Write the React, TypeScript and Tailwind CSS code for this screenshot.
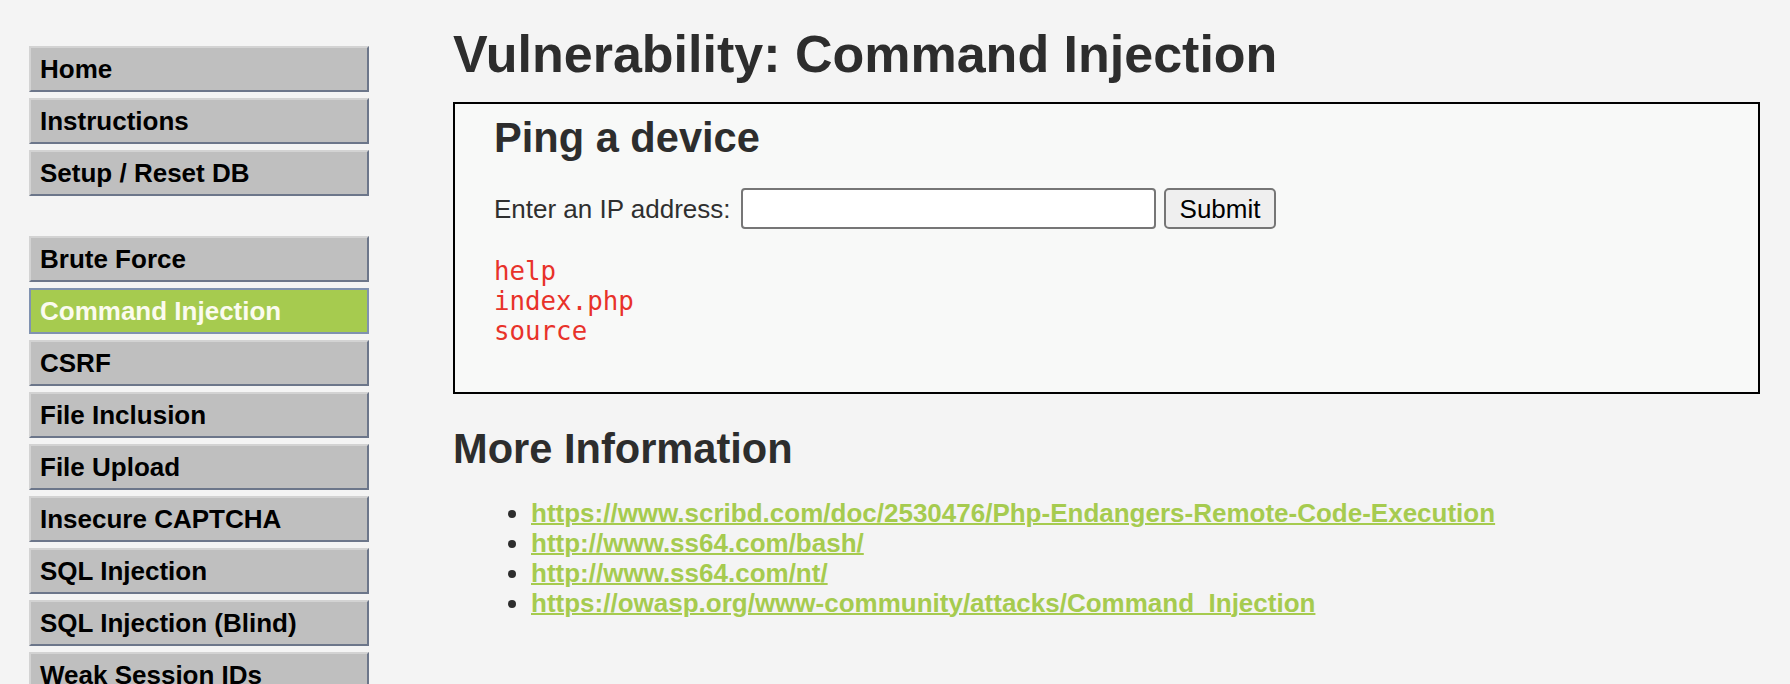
import React from "react";

/**
 * DVWA - Command Injection page
 * Left menu + main content (ping form, output, more info links)
 */

const topMenu = ["Home", "Instructions", "Setup / Reset DB"];

const vulnMenu = [
	"Brute Force",
	"Command Injection",
	"CSRF",
	"File Inclusion",
	"File Upload",
	"Insecure CAPTCHA",
	"SQL Injection",
	"SQL Injection (Blind)",
	"Weak Session IDs",
	"XSS (DOM)",
	"XSS (Reflected)",
];

const links = [
	"https://www.scribd.com/doc/2530476/Php-Endangers-Remote-Code-Execution",
	"http://www.ss64.com/bash/",
	"http://www.ss64.com/nt/",
	"https://owasp.org/www-community/attacks/Command_Injection",
];

const MenuItem = ({ label, selected }: { label: string; selected?: boolean }) => (
	<li>
		<a
			href="#"
			className={
				selected
					? "block border-2 border-[#8092b0] bg-[#a6cb4f] px-[9px] py-[6px] text-[26px] font-bold leading-[30px] text-[#fbfbef]"
					: "block border-2 border-t-[#d3d3d3] border-l-[#d3d3d3] border-r-[#6c768a] border-b-[#6c768a] bg-[#bfbfbf] px-[9px] py-[6px] text-[26px] font-bold leading-[30px] text-black"
			}
		>
			{label}
		</a>
	</li>
);

export default function App() {
	return (
		<div className="flex h-[684px] overflow-hidden bg-[#f4f4f4] font-['Liberation_Sans',Arial,sans-serif] text-[#2f2f2f]">
			{/* ================= MENU ================= */}
			<div className="ml-[29px] w-[340px] shrink-0 pt-[46px]">
				<ul className="flex flex-col gap-[6px]">
					{topMenu.map((m) => (
						<MenuItem key={m} label={m} />
					))}
				</ul>
				<ul className="mt-[40px] flex flex-col gap-[6px]">
					{vulnMenu.map((m) => (
						<MenuItem key={m} label={m} selected={m === "Command Injection"} />
					))}
				</ul>
			</div>

			{/* ================= BODY ================= */}
			<div className="ml-[84px] mr-[30px] flex-1 pt-[24px]">
				<h1 className="text-[52px] font-bold leading-[60px] text-[#2d2d2d]">
					Vulnerability: Command Injection
				</h1>

				<div className="mt-[18px] border-2 border-black bg-[#f8f9f8] pl-[39px] pt-[10px] pb-[46px]">
					<h2 className="text-[41.6px] font-bold leading-[48px] text-[#2d2d2d]">Ping a device</h2>

					<form className="mt-[26px] flex items-center text-[26px]" onSubmit={(e) => e.preventDefault()}>
						<span className="leading-[30px]">Enter an IP address:</span>
						<input
							type="text"
							className="ml-[10px] h-[41px] w-[415px] rounded-[4px] border-2 border-[#767676] bg-white"
						/>
						<button
							type="submit"
							className="ml-[8px] h-[41px] rounded-[5px] border-2 border-[#767676] bg-[#efefef] px-[14px] leading-[30px] text-black"
						>
							Submit
						</button>
					</form>

					<pre className="mt-[27px] font-['DejaVu_Sans_Mono',monospace] text-[25.8px] leading-[30px] text-[#e8322a]">
						{"help\nindex.php\nsource"}
					</pre>
				</div>

				<h2 className="mt-[31px] text-[41.6px] font-bold leading-[48px] text-[#2d2d2d]">More Information</h2>
				<ul className="mt-[25px] list-disc pl-[78px] text-[26px] leading-[30px] text-[#2d2d2d]">
					{links.map((l) => (
						<li key={l}>
							<a href="#" className="font-bold text-[#a6cb4f] underline decoration-2">
								{l}
							</a>
						</li>
					))}
				</ul>
			</div>
		</div>
	);
}
